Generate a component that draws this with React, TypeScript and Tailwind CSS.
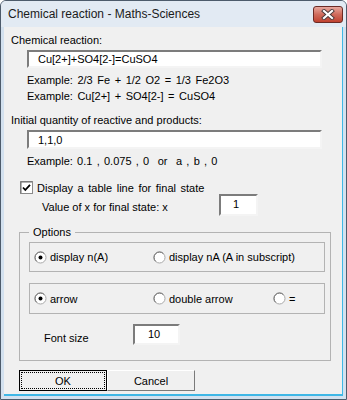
import React from "react";

const font = "font-['Liberation_Sans',Arial,sans-serif] text-[11px] leading-[14px] text-black";

function TextBox({ value, className }: { value: string; className: string }) {
  return (
    <div
      className={`bg-white border-2 border-t-[#7c7c7c] border-l-[#7c7c7c] border-b-[#f4f4f4] border-r-[#f4f4f4] flex items-center ${className}`}
    >
      {value}
    </div>
  );
}

function Radio({ checked }: { checked?: boolean }) {
  return (
    <svg width="13" height="13" viewBox="0 0 13 13" className="shrink-0">
      <circle cx="6.5" cy="6.5" r="5.5" fill="#fff" stroke="#a7a7a7" />
      <path d="M2.6 10.4 A5.5 5.5 0 0 1 10.4 2.6" fill="none" stroke="#6f6f6f" />
      {checked && <circle cx="6.5" cy="6.5" r="2" fill="#000" />}
    </svg>
  );
}

function Option({ checked, label, width }: { checked?: boolean; label: string; width: string }) {
  return (
    <div className={`flex items-center gap-[3px] ${width}`}>
      <Radio checked={checked} />
      <span>{label}</span>
    </div>
  );
}

export default function App() {
  return (
    <div className={`w-[347px] h-[400px] flex flex-col bg-[#d3e1ef] border border-[#4d5b6b] rounded-t-[6px] overflow-hidden ${font}`}>
      {/* title bar */}
      <div className="h-[26px] shrink-0 flex items-center pl-[7px] pr-[3px] bg-[#e2eaf3]">
        <span className="text-[12px] text-[#1b1b1b]">Chemical reaction - Maths-Sciences</span>
        <div className="ml-auto w-[30px] h-[17px] rounded-[3px] border border-[#6b2b25] bg-gradient-to-b from-[#e7a79d] via-[#cf6b5c] to-[#c0412f] flex items-center justify-center">
          <svg width="14" height="11" viewBox="0 0 14 11">
            <path d="M3 2 L11 9 M11 2 L3 9" stroke="#4a3a3a" strokeWidth="4" strokeLinecap="square" />
            <path d="M3 2 L11 9 M11 2 L3 9" stroke="#fff" strokeWidth="2.2" strokeLinecap="square" />
          </svg>
        </div>
      </div>

      {/* client area */}
      <div className="flex-1 mx-[3px] mb-[3px] bg-[#f0f0f0] border-b-2 border-r border-[#3fb7e6] flex flex-col pl-[7px] pt-[6px]">
        <div>Chemical reaction:</div>
        <TextBox value="Cu[2+]+SO4[2-]=CuSO4" className="ml-[16px] mt-[3px] w-[295px] h-[18px] pl-[9px]" />
        <div className="ml-[16px] mt-[5px] [word-spacing:1.5px]">Example: 2/3 Fe + 1/2 O2 = 1/3 Fe2O3</div>
        <div className="ml-[16px] mt-[2px] [word-spacing:1.5px]">Example: Cu[2+] + SO4[2-] = CuSO4</div>

        <div className="mt-[10px]">Initial quantity of reactive and products:</div>
        <TextBox value="1,1,0" className="ml-[16px] mt-[3px] w-[295px] h-[19px] pl-[9px]" />
        <div className="ml-[16px] mt-[5px] [word-spacing:1.2px]">Example: 0.1 , 0.075 , 0&nbsp; or&nbsp; a , b , 0</div>

        <div className="ml-[9px] mt-[13px] h-[13px] flex items-center gap-[4px]">
          <svg width="13" height="13" viewBox="0 0 13 13" className="shrink-0">
            <rect x="0.5" y="0.5" width="12" height="12" fill="#fff" stroke="#8a8a8a" />
            <path d="M1 12 V1 H12" fill="none" stroke="#6a6a6a" />
            <path d="M3 6.5 L5.3 9 L10 3.8" fill="none" stroke="#000" strokeWidth="1.8" />
          </svg>
          <span className="[word-spacing:1.5px]">Display a table line for final state</span>
        </div>

        <div className="ml-[31px] flex items-start">
          <span className="w-[177px] mt-[6px]">Value of x for final state: x</span>
          <TextBox value="1" className="w-[39px] h-[22px] pl-[12px] items-start pt-[1px]" />
        </div>

        <fieldset className="ml-[8px] mt-[9px] w-[312px] border border-[#b3b3b3] pl-[9px] pr-[5px] pt-[3px] pb-[15px] min-w-0">
          <legend className="px-[4px]">Options</legend>
          <div className="h-[30px] border border-[#b3b3b3] flex items-center pl-[4px]">
            <Option checked label="display n(A)" width="w-[119px]" />
            <Option label="display nA (A in subscript)" width="" />
          </div>
          <div className="mt-[11px] h-[31px] border border-[#b3b3b3] flex items-center pl-[4px]">
            <Option checked label="arrow" width="w-[119px]" />
            <Option label="double arrow" width="w-[120px]" />
            <Option label="=" width="" />
          </div>
          <div className="mt-[10px] flex items-start">
            <span className="ml-[15px] w-[89px] mt-[7px]">Font size</span>
            <TextBox value="10" className="w-[47px] h-[21px] pl-[13px] items-start pt-[1px]" />
          </div>
        </fieldset>

        <div className="ml-[8px] mt-[9px] flex">
          <div className="w-[88px] h-[21px] border border-black p-[1px] bg-[#f0f0f0]">
            <div className="h-full border border-dotted border-black flex items-center justify-center">OK</div>
          </div>
          <div className="w-[88px] h-[21px] border border-t-white border-l-white border-b-[#7a7a7a] border-r-[#7a7a7a] flex items-center justify-center">
            Cancel
          </div>
        </div>
      </div>
    </div>
  );
}
